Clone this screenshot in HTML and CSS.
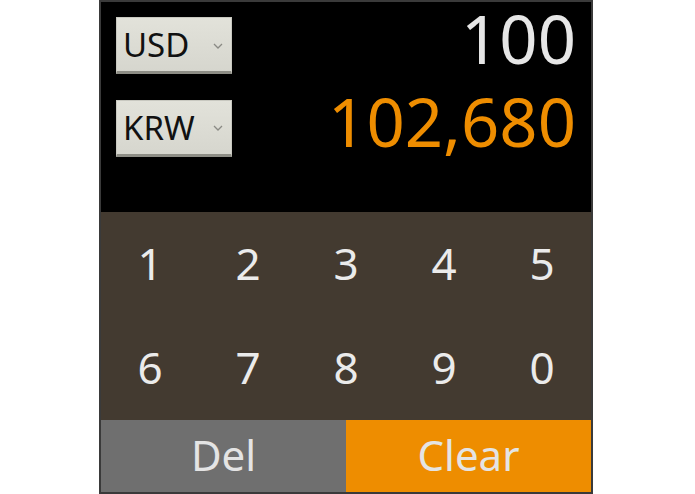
FILE: index.html
```html
<!DOCTYPE html>
<html lang="en">
  <head>
    <meta charset="UTF-8" />
    <meta name="viewport" content="width=device-width, initial-scale=1.0" />
    <title>Currency Converter</title>
    <link rel="stylesheet" href="styles.css">
  </head>
  <body>
    <div class="calc">
      <div class="display">
        <div class="row">
          <div class="select">
            <span class="select-text">USD</span>
            <svg class="chevron" width="10" height="6" viewBox="0 0 10 6">
              <path d="M1 1 L5 5 L9 1" fill="none" stroke="#8a8a84" stroke-width="1.3" />
            </svg>
          </div>
          <span class="amount from">100</span>
        </div>
        <div class="row">
          <div class="select">
            <span class="select-text">KRW</span>
            <svg class="chevron" width="10" height="6" viewBox="0 0 10 6">
              <path d="M1 1 L5 5 L9 1" fill="none" stroke="#8a8a84" stroke-width="1.3" />
            </svg>
          </div>
          <span class="amount to">102,680</span>
        </div>
      </div>

      <div class="keypad">
        <button class="key">1</button>
        <button class="key">2</button>
        <button class="key">3</button>
        <button class="key">4</button>
        <button class="key">5</button>
        <button class="key">6</button>
        <button class="key">7</button>
        <button class="key">8</button>
        <button class="key">9</button>
        <button class="key">0</button>
      </div>

      <div class="actions">
        <button class="action del">Del</button>
        <button class="action clear">Clear</button>
      </div>
    </div>
  </body>
</html>
```

FILE: styles.css
```css
:root {
  --frame: #3a3a3a;
  --display-bg: #000000;
  --keypad-bg: #433a30;
  --key-text: #ebebeb;
  --orange: #ee8d00;
  --del-bg: #6f6f6f;
}

* {
  margin: 0;
  padding: 0;
  box-sizing: border-box;
}

body {
  font-family: "Noto Sans", "Open Sans", sans-serif;
  background: #ffffff;
  display: flex;
  justify-content: center;
  padding-right: 3px;
}

.calc {
  width: 494px;
  height: 494px;
  border: 2px solid var(--frame);
  display: flex;
  flex-direction: column;
}

.display {
  height: 210px;
  background: var(--display-bg);
  padding: 0 15px;
  display: flex;
  flex-direction: column;
  gap: 9px;
}

.row {
  display: flex;
  align-items: flex-start;
  justify-content: space-between;
}

.select {
  width: 116px;
  height: 57px;
  margin-top: 15px;
  background: linear-gradient(#e2e2da, #d6d6ce);
  border: 1px solid #c8c8c0;
  border-bottom: 3px solid #8e8e86;
  display: flex;
  align-items: center;
  justify-content: space-between;
  padding: 0 8px 0 6px;
}

.select-text {
  font-size: 33px;
  color: #111111;
}

.chevron {
  margin-top: 2px;
}

.amount {
  font-size: 67px;
  line-height: 1.1;
}

.from {
  color: #e6e6e6;
}

.to {
  color: var(--orange);
}

.keypad {
  height: 208px;
  background: var(--keypad-bg);
  display: grid;
  grid-template-columns: repeat(5, 1fr);
  grid-template-rows: repeat(2, 1fr);
}

.key,
.action {
  border: none;
  background: transparent;
  font-family: inherit;
  color: var(--key-text);
  display: flex;
  align-items: center;
  justify-content: center;
}

.key {
  font-size: 44px;
  padding-bottom: 3px;
}

.actions {
  flex: 1;
  display: grid;
  grid-template-columns: 1fr 1fr;
}

.action {
  font-size: 42px;
  color: #e4e4e4;
  padding-bottom: 4px;
}

.del {
  background: var(--del-bg);
}

.clear {
  background: var(--orange);
}
```
